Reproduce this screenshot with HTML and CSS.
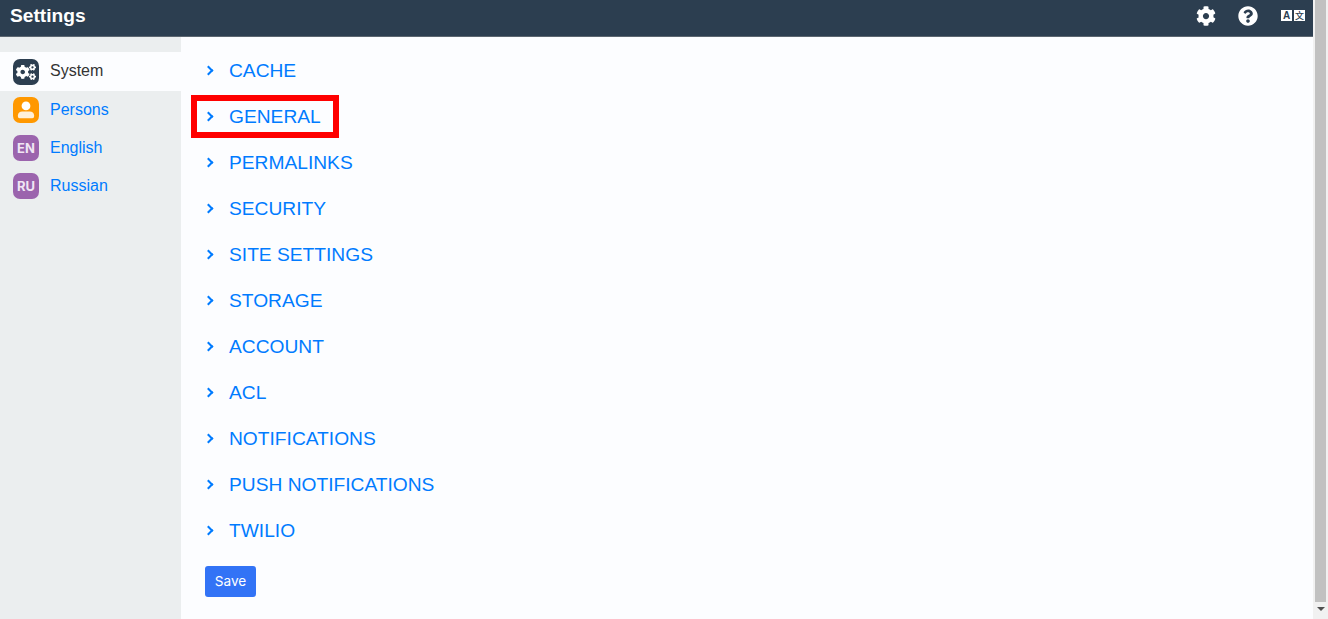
FILE: index.html
```html
<!DOCTYPE html>
<html lang="en">

<head>
    <meta charset="UTF-8">
    <meta name="viewport" content="width=device-width, initial-scale=1.0">
    <title>Settings</title>
    <link rel="stylesheet" href="styles.css">
</head>

<body>
    <div class="page">
        <header class="topBar">
            <div class="topTitle">Settings</div>
            <div class="topIcons">
                <svg class="gearIcon" viewBox="0 0 512 512"><path fill="#fff" d="M487.4 315.7l-42.6-24.6c4.3-23.2 4.3-47 0-70.2l42.6-24.6c4.9-2.8 7.1-8.6 5.5-14-11.1-35.6-30-67.8-54.7-94.6-3.8-4.1-10-5.1-14.8-2.3L380.8 110c-17.9-15.4-38.5-27.3-60.8-35.1V25.8c0-5.6-3.9-10.5-9.4-11.7-36.7-8.2-74.3-7.8-109.2 0-5.5 1.2-9.4 6.1-9.4 11.7V75c-22.2 7.9-42.8 19.8-60.8 35.1L88.7 85.5c-4.9-2.8-11-1.9-14.8 2.3-24.7 26.7-43.6 58.9-54.7 94.6-1.7 5.4.6 11.2 5.5 14L67.3 221c-4.3 23.2-4.3 47 0 70.2l-42.6 24.6c-4.9 2.8-7.1 8.6-5.5 14 11.1 35.6 30 67.8 54.7 94.6 3.8 4.1 10 5.1 14.8 2.3l42.6-24.6c17.9 15.4 38.5 27.3 60.8 35.1v49.2c0 5.6 3.9 10.5 9.4 11.7 36.7 8.2 74.3 7.8 109.2 0 5.5-1.2 9.4-6.1 9.4-11.7v-49.2c22.2-7.9 42.8-19.8 60.8-35.1l42.6 24.6c4.9 2.8 11 1.9 14.8-2.3 24.7-26.7 43.6-58.9 54.7-94.6 1.5-5.5-.7-11.3-5.6-14.1zM256 336c-44.1 0-80-35.9-80-80s35.9-80 80-80 80 35.9 80 80-35.9 80-80 80z"/></svg>
                <svg class="helpIcon" viewBox="0 0 512 512"><path fill="#fff" d="M504 256c0 137-111 248-248 248S8 393 8 256C8 119.100 119 8 256 8s248 111 248 248zM262.700 90c-54.500 0-89.300 23-116.600 63.800-3.500 5.300-2.400 12.400 2.700 16.300l34.700 26.300c5.200 3.900 12.600 3 16.700-2.100 17.900-22.700 30.100-35.800 57.300-35.800 20.400 0 45.700 13.100 45.700 33 0 15-12.400 22.700-32.600 34-23.600 13.200-54.800 29.700-54.800 70.900V300c0 6.600 5.400 12 12 12h56c6.600 0 12-5.400 12-12v-1.300c0-28.600 83.500-29.800 83.500-107.100C379.300 133.300 319 90 262.700 90zM256 339c-25.500 0-46.200 20.700-46.200 46.200 0 25.500 20.700 46.200 46.200 46.200s46.200-20.700 46.200-46.200c0-25.500-20.700-46.200-46.200-46.200z"/></svg>
                <div class="langIcon">
                    <span class="langA">A</span>
                    <span class="langB">文</span>
                </div>
            </div>
        </header>

        <div class="mainRow">
            <nav class="sidebar">
                <a class="navItem active">
                    <span class="badge badgeDark">
                        <svg viewBox="0 0 640 512" width="20" height="16"><path fill="#fff" d="M512.1 191l-8.2 14.3c-3 5.300-9.400 7.500-15.100 5.400-11.800-4.400-22.600-10.700-32.100-18.600-4.600-3.800-5.800-10.500-2.800-15.700l8.200-14.300c-6.900-8-12.300-17.300-15.900-27.400h-16.500c-6 0-11.200-4.300-12.200-10.300-2-12-2.100-24.600 0-37.100 1-6 6.200-10.400 12.200-10.400h16.500c3.600-10.100 9-19.400 15.900-27.400l-8.200-14.300c-3-5.200-1.900-11.900 2.800-15.700 9.500-7.900 20.400-14.200 32.100-18.600 5.700-2.100 12.100.1 15.100 5.400l8.200 14.300c10.500-1.900 21.200-1.900 31.700 0L552 6.300c3-5.300 9.400-7.500 15.100-5.400 11.800 4.400 22.600 10.700 32.100 18.600 4.600 3.800 5.800 10.500 2.800 15.700l-8.200 14.300c6.900 8 12.300 17.300 15.900 27.400h16.500c6 0 11.200 4.300 12.200 10.300 2 12 2.100 24.600 0 37.100-1 6-6.200 10.400-12.200 10.400h-16.500c-3.600 10.100-9 19.400-15.900 27.400l8.200 14.300c3 5.200 1.900 11.900-2.800 15.700-9.500 7.900-20.400 14.200-32.100 18.600-5.700 2.100-12.100-.1-15.100-5.400l-8.200-14.300c-10.400 1.900-21.200 1.900-31.700 0zm-10.500-58.800c38.500 29.600 82.400-14.300 52.800-52.800-38.500-29.700-82.400 14.300-52.800 52.800zM386.300 286.100l33.700 16.800c10.100 5.800 14.500 18.100 10.500 29.100-8.900 24.200-26.400 46.400-42.600 65.800-7.400 8.900-20.200 11.100-30.300 5.300l-29.100-16.800c-16 13.700-34.600 24.600-54.900 31.700v33.600c0 11.600-8.300 21.600-19.700 23.600-24.600 4.200-50.400 4.400-75.900 0-11.500-2-20-11.900-20-23.600V418c-20.300-7.200-38.900-18-54.900-31.700L74 403c-10 5.800-22.900 3.600-30.300-5.300-16.200-19.400-33.300-41.600-42.200-65.700-4-10.900.4-23.200 10.500-29.100l33.300-16.800c-3.900-20.900-3.900-42.400 0-63.400L12 205.800c-10.100-5.800-14.600-18.100-10.500-29 8.900-24.200 26-46.400 42.200-65.800 7.400-8.900 20.200-11.100 30.300-5.300l29.100 16.800c16-13.700 34.600-24.600 54.900-31.700V57.100c0-11.500 8.200-21.500 19.600-23.500 24.600-4.200 50.500-4.400 76-.1 11.500 2 20 11.900 20 23.600v33.600c20.300 7.200 38.900 18 54.900 31.700l29.100-16.800c10-5.800 22.900-3.600 30.300 5.300 16.200 19.400 33.200 41.600 42.100 65.800 4 10.900.1 23.200-10 29.100l-33.700 16.800c3.900 21 3.900 42.500 0 63.500zm-117.600 21.100c59.200-77-28.700-164.900-105.700-105.700-59.200 77 28.700 164.900 105.700 105.700zm243.400 182.700l-8.200 14.300c-3 5.300-9.400 7.500-15.100 5.400-11.800-4.400-22.600-10.700-32.100-18.600-4.600-3.800-5.800-10.500-2.800-15.700l8.200-14.300c-6.900-8-12.300-17.300-15.900-27.400h-16.500c-6 0-11.200-4.300-12.200-10.300-2-12-2.100-24.600 0-37.100 1-6 6.200-10.400 12.200-10.400h16.500c3.600-10.100 9-19.400 15.900-27.400l-8.200-14.300c-3-5.200-1.900-11.900 2.800-15.700 9.500-7.900 20.400-14.200 32.100-18.600 5.700-2.100 12.100.1 15.100 5.400l8.200 14.300c10.500-1.900 21.200-1.900 31.700 0l8.200-14.300c3-5.300 9.400-7.500 15.100-5.400 11.800 4.400 22.600 10.700 32.100 18.600 4.600 3.800 5.800 10.500 2.800 15.700l-8.200 14.300c6.900 8 12.300 17.300 15.900 27.400h16.500c6 0 11.200 4.300 12.200 10.300 2 12 2.100 24.600 0 37.100-1 6-6.200 10.400-12.200 10.400h-16.500c-3.600 10.100-9 19.400-15.900 27.400l8.200 14.300c3 5.200 1.900 11.900-2.800 15.700-9.500 7.900-20.400 14.200-32.100 18.600-5.700 2.100-12.100-.1-15.100-5.400l-8.200-14.300c-10.400 1.900-21.200 1.900-31.700 0zM501.600 431c38.500 29.600 82.400-14.300 52.800-52.800-38.500-29.600-82.400 14.300-52.800 52.800z"/></svg>
                    </span>
                    <span class="navLabel">System</span>
                </a>
                <a class="navItem">
                    <span class="badge badgeOrange">
                        <svg viewBox="0 0 24 24" width="22" height="22"><circle cx="12" cy="7.500" r="4.800" fill="#fff"/><path fill="#fff" fill-opacity="0.85" d="M5 21c-1 0-1.800-.8-1.800-1.800v-1.400c0-2.600 2.100-4.300 4.600-4.300h8.400c2.500 0 4.600 1.700 4.600 4.300v1.400c0 1-.8 1.800-1.800 1.800z"/></svg>
                    </span>
                    <span class="navLabel">Persons</span>
                </a>
                <a class="navItem">
                    <span class="badge badgePurple">EN</span>
                    <span class="navLabel">English</span>
                </a>
                <a class="navItem">
                    <span class="badge badgePurple">RU</span>
                    <span class="navLabel">Russian</span>
                </a>
            </nav>

            <main class="content">
                <div class="section"><span class="chevron"></span><span class="sectionName">CACHE</span></div>
                <div class="section marked"><span class="chevron"></span><span class="sectionName">GENERAL</span></div>
                <div class="section"><span class="chevron"></span><span class="sectionName">PERMALINKS</span></div>
                <div class="section"><span class="chevron"></span><span class="sectionName">SECURITY</span></div>
                <div class="section"><span class="chevron"></span><span class="sectionName">SITE SETTINGS</span></div>
                <div class="section"><span class="chevron"></span><span class="sectionName">STORAGE</span></div>
                <div class="section"><span class="chevron"></span><span class="sectionName">ACCOUNT</span></div>
                <div class="section"><span class="chevron"></span><span class="sectionName">ACL</span></div>
                <div class="section"><span class="chevron"></span><span class="sectionName">NOTIFICATIONS</span></div>
                <div class="section"><span class="chevron"></span><span class="sectionName">PUSH NOTIFICATIONS</span></div>
                <div class="section"><span class="chevron"></span><span class="sectionName">TWILIO</span></div>
                <button class="saveBtn">Save</button>
            </main>
        </div>
    </div>

    <div class="scrollTrack">
        <div class="scrollThumb"></div>
        <div class="scrollArrow"></div>
    </div>
</body>

</html>
```

FILE: styles.css
```css
html,
body {
    height: 100%;
}

body {
    margin: 0;
    display: flex;
    overflow: hidden;
    font-family: "Liberation Sans", Arial, sans-serif;
    background-color: #fcfdff;
}

.page {
    flex: 1;
    display: flex;
    flex-direction: column;
    min-width: 0;
}

.topBar {
    height: 36px;
    flex-shrink: 0;
    display: flex;
    justify-content: space-between;
    align-items: center;
    padding: 0 8px 0 10px;
    background-color: #2c3e50;
    border-bottom: 1px solid #5c6670;
}

.topTitle {
    margin-top: -5px;
    font-size: 19.2px;
    font-weight: bold;
    color: #fff;
}

.topIcons {
    display: flex;
    align-items: center;
    gap: 22px;
    margin-top: -5px;
}

.gearIcon,
.helpIcon {
    width: 20px;
    height: 20px;
}

.langIcon {
    display: flex;
    gap: 2px;
    margin-left: 1px;
}

.langA,
.langB {
    width: 11px;
    height: 11px;
    display: flex;
    justify-content: center;
    align-items: center;
    background-color: #fff;
    color: #2c3e50;
    font-size: 10px;
    font-weight: bold;
}

.langB {
    font-family: "Noto Sans CJK SC", sans-serif;
    font-size: 9px;
    font-weight: 500;
}

.mainRow {
    flex: 1;
    display: flex;
    min-height: 0;
}

.sidebar {
    width: 181px;
    flex-shrink: 0;
    padding-top: 15px;
    background-color: #ebeeef;
}

.navItem {
    height: 38px;
    display: flex;
    align-items: center;
    gap: 11px;
    padding-left: 13px;
    font-size: 16px;
    color: #007bff;
}

.navItem.active {
    height: 39px;
    background-color: #fcfdff;
    color: #333;
}

.navItem.active .navLabel {
    margin-top: -2px;
}

.badge {
    width: 26px;
    height: 26px;
    flex-shrink: 0;
    display: flex;
    justify-content: center;
    align-items: center;
    border-radius: 7px;
    color: #fff;
    font-family: Inter, sans-serif;
    font-size: 13px;
    font-weight: 700;
}

.badgeDark {
    background-color: #2c3e50;
}

.badgeOrange {
    background-color: #ff9800;
}

.badgePurple {
    background-color: #9b64ad;
    color: #f0e6f4;
}

.content {
    flex: 1;
    display: flex;
    flex-direction: column;
    align-items: flex-start;
    padding: 10px 0 0 24px;
}

.section {
    height: 46px;
    display: flex;
    align-items: center;
    gap: 15px;
    font-size: 19.2px;
    color: #007bff;
}

.sectionName {
    padding-top: 2px;
}

.section.marked {
    outline: 6px solid #ff0000;
    height: 31px;
    margin: 7.500px 0 7.500px -8px;
    padding: 0 12px 0 8px;
}

.chevron {
    width: 9px;
    height: 9px;
    position: relative;
}

.chevron::after {
    content: "";
    position: absolute;
    left: 0;
    top: 1px;
    width: 5px;
    height: 5px;
    border-top: 2px solid #007bff;
    border-right: 2px solid #007bff;
    transform: rotate(45deg);
}

.saveBtn {
    width: 51px;
    height: 31px;
    margin-top: 13px;
    padding: 0 0 2px;
    border: none;
    border-radius: 3px;
    background-color: #3273f6;
    color: #fff;
    font-family: Inter, sans-serif;
    font-size: 13.600px;
}

.scrollTrack {
    width: 15px;
    flex-shrink: 0;
    display: flex;
    flex-direction: column;
    align-items: center;
    background-color: #f1f1f1;
}

.scrollThumb {
    width: 11px;
    height: 602px;
    background-color: #c1c1c1;
}

.scrollArrow {
    margin-top: 5px;
    width: 0;
    height: 0;
    border-left: 4px solid transparent;
    border-right: 4px solid transparent;
    border-top: 4px solid #505050;
}
```
